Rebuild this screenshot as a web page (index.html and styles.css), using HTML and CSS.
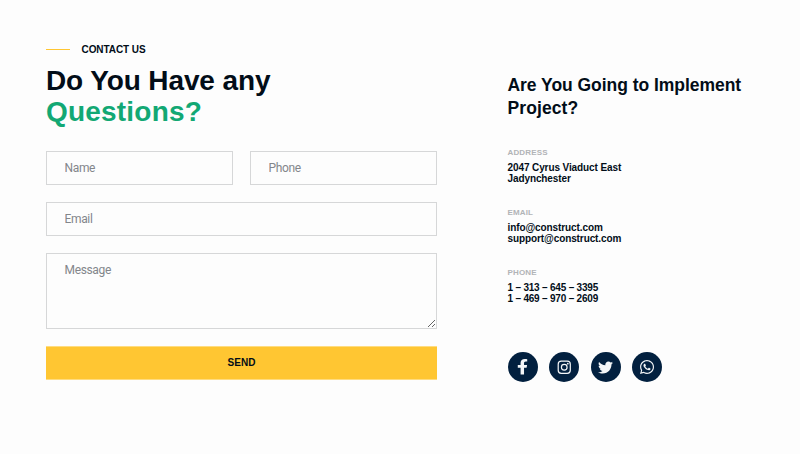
FILE: index.html
```html
<!DOCTYPE html>
<html lang="en">
<head>
<meta charset="utf-8">
<title>Contact us</title>
<link rel="stylesheet" href="styles.css">
</head>
<body>
<main class="contact">
  <section class="main">
    <p class="eyebrow"><span class="eyebrow-text">CONTACT US</span></p>
    <h1 class="title"><span class="title-top">Do You Have any</span><br><span class="accent">Questions?</span></h1>
    <form class="form">
      <input class="field" type="text" placeholder="Name">
      <input class="field" type="text" placeholder="Phone">
      <input class="field wide" type="text" placeholder="Email">
      <textarea class="field wide area" placeholder="Message"></textarea>
      <button class="send wide" type="button">SEND</button>
    </form>
  </section>
  <aside class="side">
    <h2 class="subtitle">Are You Going to Implement<br><span class="project">Project?</span></h2>
    <dl class="details">
      <div class="detail">
        <dt>ADDRESS</dt>
        <dd>2047 Cyrus Viaduct East<br>Jadynchester</dd>
      </div>
      <div class="detail">
        <dt>EMAIL</dt>
        <dd>info@construct.com<br>support@construct.com</dd>
      </div>
      <div class="detail">
        <dt>PHONE</dt>
        <dd class="phone">1 – 313 – 645 – 3395<br>1 – 469 – 970 – 2609</dd>
      </div>
    </dl>
    <nav class="social">
      <a class="round" aria-label="Facebook"><svg width="11" height="15.500" viewBox="0 0 320 512" preserveAspectRatio="none"><path d="M279.14 288l14.22-92.66h-88.91v-60.13c0-25.35 12.42-50.06 52.24-50.06h40.42V6.26S260.43 0 225.36 0c-73.22 0-121.08 44.38-121.08 124.72v70.62H22.89V288h81.39v224h100.17V288z"/></svg></a>
      <a class="round" aria-label="Instagram"><svg width="14.500" height="14.500" viewBox="0 0 24 24"><path fill-rule="evenodd" d="M7 1h10a6 6 0 0 1 6 6v10a6 6 0 0 1-6 6H7a6 6 0 0 1-6-6V7a6 6 0 0 1 6-6zm0 2a4 4 0 0 0-4 4v10a4 4 0 0 0 4 4h10a4 4 0 0 0 4-4V7a4 4 0 0 0-4-4zM12 6.300a5.700 5.700 0 1 1 0 11.400a5.700 5.700 0 0 1 0-11.400zm0 2a3.700 3.700 0 1 0 0 7.400a3.700 3.700 0 0 0 0-7.400z"/><circle cx="17.900" cy="6.100" r="1.400"/></svg></a>
      <a class="round" aria-label="Twitter"><svg width="15" height="15" viewBox="0 0 512 512"><path d="M459.370 151.716c.325 4.548.325 9.097.325 13.645 0 138.720-105.583 298.558-298.558 298.558-59.452 0-114.680-17.219-161.137-47.106 8.447.974 16.568 1.299 25.340 1.299 49.055 0 94.213-16.568 130.274-44.832-46.132-.975-84.792-31.188-98.112-72.772 6.498.974 12.995 1.624 19.818 1.624 9.421 0 18.843-1.300 27.614-3.573-48.081-9.747-84.143-51.980-84.143-102.985v-1.299c13.969 7.797 30.214 12.670 47.431 13.319-28.264-18.843-46.781-51.005-46.781-87.391 0-19.492 5.197-37.360 14.294-52.954 51.655 63.675 129.300 105.258 216.365 109.807-1.624-7.797-2.599-15.918-2.599-24.040 0-57.828 46.782-104.934 104.934-104.934 30.213 0 57.502 12.670 76.670 33.137 23.715-4.548 46.456-13.320 66.599-25.340-7.798 24.366-24.366 44.833-46.132 57.827 21.117-2.273 41.584-8.122 60.426-16.243-14.292 20.791-32.161 39.308-52.628 54.253z"/></svg></a>
      <a class="round" aria-label="WhatsApp"><svg width="14" height="16" viewBox="0 0 448 512"><path d="M380.900 97.100C339 55.100 283.200 32 223.900 32c-122.400 0-222 99.600-222 222 0 39.100 10.200 77.300 29.600 111L0 480l117.700-30.900c32.400 17.700 68.900 27 106.100 27h.1c122.300 0 224.100-99.600 224.100-222 0-59.300-25.200-115-67.100-157zm-157 341.600c-33.200 0-65.700-8.900-94-25.700l-6.700-4-69.800 18.300L72 359.200l-4.400-7c-18.500-29.400-28.200-63.300-28.200-98.200 0-101.700 82.800-184.500 184.600-184.500 49.300 0 95.600 19.200 130.400 54.100 34.800 34.900 56.200 81.200 56.100 130.500 0 101.800-84.900 184.600-186.600 184.600zm101.200-138.200c-5.500-2.800-32.800-16.200-37.900-18-5.100-1.900-8.800-2.800-12.500 2.800-3.700 5.600-14.300 18-17.600 21.800-3.200 3.700-6.500 4.200-12 1.400-32.600-16.300-54-29.100-75.500-66-5.700-9.800 5.700-9.100 16.300-30.300 1.800-3.700.9-6.900-.5-9.700-1.400-2.800-12.500-30.100-17.100-41.200-4.500-10.800-9.100-9.300-12.500-9.500-3.200-.2-6.900-.2-10.600-.2-3.700 0-9.700 1.400-14.800 6.900-5.100 5.600-19.400 19-19.400 46.300 0 27.300 19.900 53.700 22.600 57.400 2.800 3.700 39.100 59.700 94.800 83.800 35.200 15.200 49 16.500 66.600 13.900 10.700-1.600 32.800-13.400 37.400-26.400 4.600-13 4.600-24.100 3.200-26.400-1.300-2.500-5-3.900-10.500-6.600z"/></svg></a>
    </nav>
  </aside>
</main>
</body>
</html>
```
FILE: styles.css
```css
* { box-sizing: border-box; }
body {
  margin: 0;
  background: #fdfdfd;
  color: #020d18;
  font-family: "Liberation Sans", Arial, sans-serif;
  font-weight: 700;
}
h1, h2, p, dl, dd { margin: 0; }
.contact {
  display: grid;
  grid-template-columns: 391px 260px;
  column-gap: 70.5px;
  height: 454px;
  padding: 42px 0 0 46px;
}
.eyebrow {
  display: flex;
  align-items: center;
  gap: 11.5px;
  height: 14px;
  font-size: 10px;
  line-height: 14px;
  letter-spacing: -0.07px;
}
.eyebrow-text { padding-top: 2px; }
.eyebrow::before {
  content: "";
  width: 24px;
  height: 1px;
  background: #ffc632;
}
.title {
  margin-top: 9px;
  font-size: 28px;
  line-height: 31px;
  white-space: nowrap;
}
.title-top { letter-spacing: -0.12px; }
.accent { color: #12a874; letter-spacing: 0.2px; }
.form {
  display: grid;
  grid-template-columns: 187px 187px;
  gap: 17px;
  margin-top: 24px;
}
.wide { grid-column: 1 / -1; }
.field {
  display: block;
  width: 100%;
  height: 34px;
  margin: 0;
  padding: 0 17.5px 1px;
  border: 1px solid #d6d7d8;
  border-radius: 0;
  background: transparent;
  font: 400 12px/16px Roboto, sans-serif;
  letter-spacing: -0.35px;
}
.field::placeholder { color: #83868b; opacity: 1; }
.area { height: 76px; padding-top: 8px; resize: both; }
.send {
  height: 34px;
  padding: 0;
  border: solid #ffdc80;
  border-width: 1px 0;
  background: #ffc632;
  color: #020d18;
  font: 700 10px/32px "Liberation Sans", Arial, sans-serif;
}
.side { padding-top: 32px; }
.subtitle {
  font-size: 17.5px;
  line-height: 23px;
  letter-spacing: -0.04px;
  white-space: nowrap;
}
.subtitle .project { letter-spacing: 0.1px; }
.details { margin-top: 26px; }
.detail { height: 60px; }
.detail dt {
  height: 14px;
  color: #b2b4b7;
  font-size: 8px;
  line-height: 14px;
  letter-spacing: 0.15px;
}
.detail dd {
  margin-top: 2px;
  font-size: 10px;
  line-height: 11px;
  letter-spacing: -0.1px;
  white-space: nowrap;
}
.detail .phone { letter-spacing: -0.2px; }
.social { display: flex; gap: 11.5px; margin-top: 26px; }
.round {
  display: flex;
  align-items: center;
  justify-content: center;
  width: 30px;
  height: 30px;
  border-radius: 50%;
  background: #02203f;
}
.round svg { fill: #f4f6f8; }
```
